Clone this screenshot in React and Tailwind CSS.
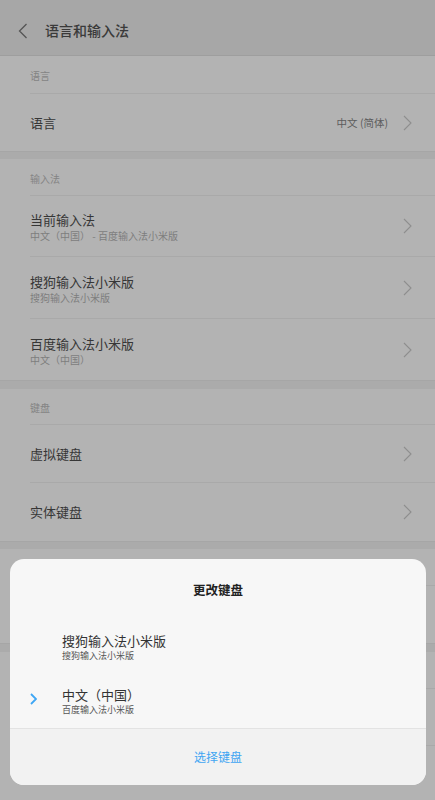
import React from "react";

const FONT = { fontFamily: '"Noto Sans CJK SC", "Noto Sans", sans-serif' };

function Chevron({ className = "" }) {
  return (
    <svg width="9" height="16" viewBox="0 0 9 16" className={className} fill="none">
      <path d="M1 1l7 7-7 7" stroke="#8e8e8e" strokeWidth="1.1" strokeLinejoin="miter" />
    </svg>
  );
}

function Band({ h = 8 }) {
  return <div className="bg-[#ababab] border-t border-[#a6a6a6]" style={{ height: h }} />;
}

function SectionHeader({ label, h }) {
  return (
    <div className="pl-[30px] bg-[#b3b3b3]" style={{ height: h }}>
      <div className="h-full border-b border-[#a9a9a9] flex items-center pt-[3px]">
        <span className="text-[10px] leading-none text-[#848484]">{label}</span>
      </div>
    </div>
  );
}

function Row({ title, sub, value, h, last }) {
  return (
    <div className="pl-[30px] bg-[#b3b3b3]" style={{ height: h }}>
      <div
        className={`h-full flex items-center pr-[23px] ${last ? "" : "border-b border-[#a9a9a9]"}`}
      >
        <div className={`flex-1 flex flex-col ${sub ? "pt-[2px]" : ""}`}>
          {title && <span className="text-[13px] leading-[18px] text-[#363636]">{title}</span>}
          {sub && <span className="text-[10px] leading-[14px] text-[#7e7e7e]">{sub}</span>}
        </div>
        {value && <span className="text-[10.5px] text-[#5c5c5c] mr-[15px]">{value}</span>}
        <Chevron />
      </div>
    </div>
  );
}

export default function App() {
  return (
    <div className="relative w-[435px] h-[800px] overflow-hidden bg-[#b3b3b3]" style={FONT}>
      {/* top bar */}
      <div className="h-[56px] bg-[#a7a7a7] border-b border-[#9e9e9e] flex items-center pt-[6px]">
        <svg width="10" height="16" viewBox="0 0 10 16" className="ml-[18px]" fill="none">
          <path d="M8.5 1L1.5 8l7 7" stroke="#555" strokeWidth="1.3" />
        </svg>
        <span className="ml-[17px] text-[14px] font-medium text-[#3a3a3a]">语言和输入法</span>
      </div>

      <SectionHeader label="语言" h={38} />
      <Row title="语言" value="中文 (简体)" h={57} last />
      <Band h={8} />

      <SectionHeader label="输入法" h={37} />
      <Row title="当前输入法" sub="中文（中国） - 百度输入法小米版" h={61} />
      <Row title="搜狗输入法小米版" sub="搜狗输入法小米版" h={62} />
      <Row title="百度输入法小米版" sub="中文（中国）" h={61} last />
      <Band h={9} />

      <SectionHeader label="键盘" h={36} />
      <Row title="虚拟键盘" h={58} />
      <Row title="实体键盘" h={58} last />
      <Band h={8} />

      <SectionHeader label="" h={37} />
      <Row h={57} last />
      <Band h={9} />

      <SectionHeader label="" h={37} />
      <Row h={57} />
      <Row h={57} last />

      {/* keyboard picker sheet */}
      <div className="absolute left-[10px] top-[559px] w-[416px] h-[226px] rounded-[14px] bg-[#f7f7f7] overflow-hidden flex flex-col">
        <div className="h-[62px] flex items-center justify-center">
          <span className="text-[12.5px] font-semibold text-[#222]">更改键盘</span>
        </div>
        <div className="h-[54px] pt-[11px] pl-[52px] flex flex-col">
          <span className="text-[13px] leading-[18px] text-[#333]">搜狗输入法小米版</span>
          <span className="text-[9px] leading-[12px] text-[#555]">搜狗输入法小米版</span>
        </div>
        <div className="h-[53px] pt-[11px] flex">
          <div className="w-[52px] flex justify-start pl-[20px] pt-[7px]">
            <svg width="7" height="12" viewBox="0 0 7 12" fill="none">
              <path d="M1 1l5 5-5 5" stroke="#3ea6f4" strokeWidth="1.8" />
            </svg>
          </div>
          <div className="flex flex-col">
            <span className="text-[13px] leading-[18px] text-[#333]">中文（中国）</span>
            <span className="text-[9px] leading-[12px] text-[#555]">百度输入法小米版</span>
          </div>
        </div>
        <div className="flex-1 bg-[#f2f2f2] border-t border-[#e3e3e3] flex items-center justify-center">
          <span className="text-[12px] text-[#3fa5f2]">选择键盘</span>
        </div>
      </div>
    </div>
  );
}
